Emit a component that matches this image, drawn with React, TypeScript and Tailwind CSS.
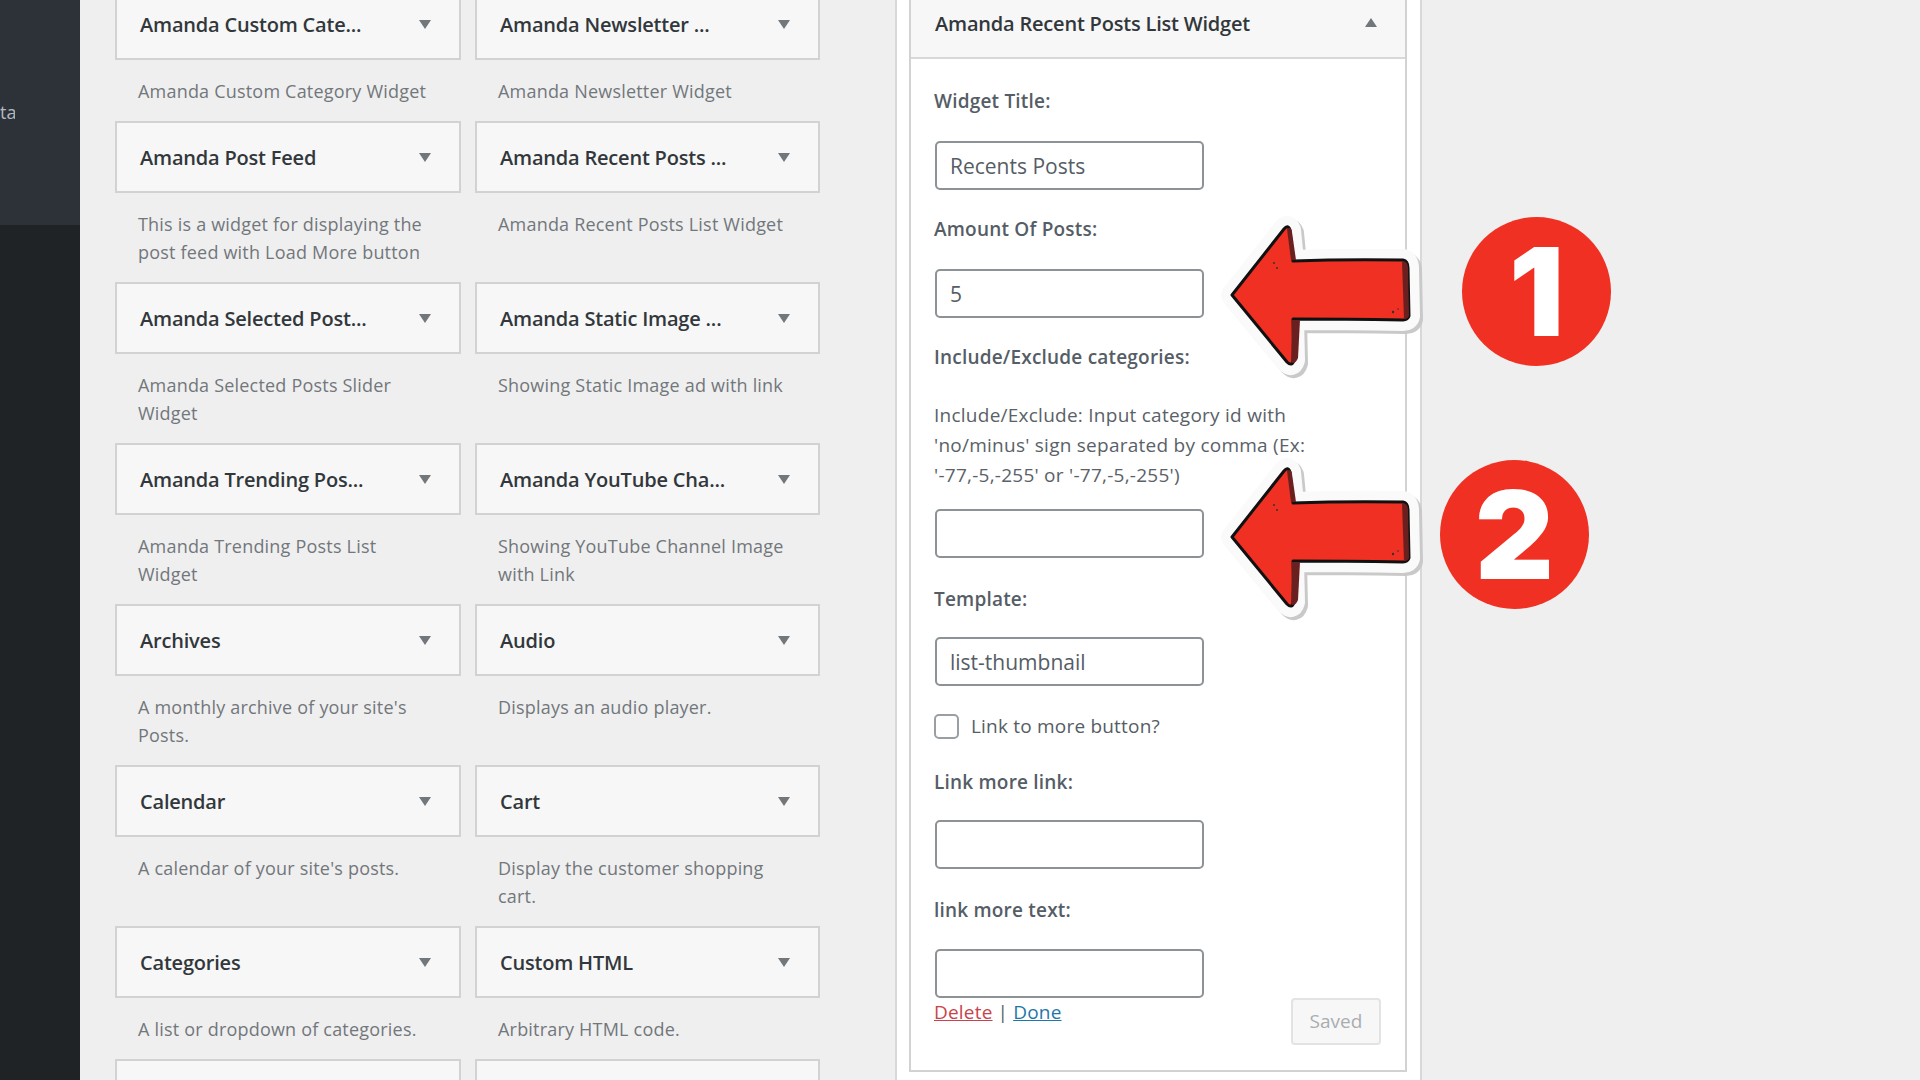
const widgets = [
  { title: "Amanda Custom Cate...", desc: "Amanda Custom Category Widget" },
  { title: "Amanda Newsletter ...", desc: "Amanda Newsletter Widget" },
  { title: "Amanda Post Feed", desc: "This is a widget for displaying the\npost feed with Load More button" },
  { title: "Amanda Recent Posts ...", desc: "Amanda Recent Posts List Widget" },
  { title: "Amanda Selected Post...", desc: "Amanda Selected Posts Slider\nWidget" },
  { title: "Amanda Static Image ...", desc: "Showing Static Image ad with link" },
  { title: "Amanda Trending Pos...", desc: "Amanda Trending Posts List\nWidget" },
  { title: "Amanda YouTube Cha...", desc: "Showing YouTube Channel Image\nwith Link" },
  { title: "Archives", desc: "A monthly archive of your site's\nPosts." },
  { title: "Audio", desc: "Displays an audio player." },
  { title: "Calendar", desc: "A calendar of your site's posts." },
  { title: "Cart", desc: "Display the customer shopping\ncart." },
  { title: "Categories", desc: "A list or dropdown of categories." },
  { title: "Custom HTML", desc: "Arbitrary HTML code." },
  { title: "", desc: "" },
  { title: "", desc: "" },
];

function Triangle({ up = false }: { up?: boolean }) {
  return (
    <svg width="12" height="9" viewBox="0 0 12 9" className={up ? "shrink-0 mb-[4px]" : "shrink-0"}>
      <polygon points={up ? "6,0 12,9 0,9" : "0,0 12,0 6,9"} fill="#72777c" />
    </svg>
  );
}

function WidgetCard({ title, desc }: { title: string; desc: string }) {
  return (
    <div>
      <div className="h-[72px] bg-[#f7f7f7] border-2 border-[#d2d2d2] pl-[23px] pr-[28px] flex items-center justify-between">
        <span className="pt-[2px] text-[20px] font-semibold text-[#32373c] whitespace-nowrap tracking-[-0.2px]">{title}</span>
        {title && <Triangle />}
      </div>
      <p className="pt-[17px] pb-[16px] pl-[23px] text-[18px] leading-[28px] text-[#72777c] whitespace-pre-line tracking-[0.2px]">{desc}</p>
    </div>
  );
}

function Label({ children }: { children: string }) {
  return <div className="-ml-[1px] h-[28px] leading-[30px] text-[19px] font-semibold text-[#555d66] tracking-[0.2px]">{children}</div>;
}

function TextInput({ value = "" }: { value?: string }) {
  return (
    <input
      readOnly
      value={value}
      className="block w-[269px] h-[49px] bg-white border-2 border-[#8d9296] rounded-[5px] px-[13px] text-[21px] text-[#555d66] outline-none"
    />
  );
}

function Arrow({ className }: { className: string }) {
  const shape = "M17 83 L69 17 Q73 12 75 18 L78 49 Q130 47 188 48 Q193 49 193 56 L194 104 Q193 108 188 108 Q130 107 78 107 L79 148 Q77 155 72 150 Z";
  return (
    <svg width="215" height="175" viewBox="0 0 215 175" className={className}>
      <path d={shape} transform="translate(3 3)" fill="#c9c9c9" stroke="#c9c9c9" strokeWidth="22" strokeLinejoin="round" />
      <path d={shape} fill="#fafafa" stroke="#fafafa" strokeWidth="22" strokeLinejoin="round" />
      <path d={shape} fill="#f03022" stroke="#111111" strokeWidth="3" strokeLinejoin="round" />
      <path d="M72 17 Q76 14 77 20 L81 48 L76 48 Z" fill="#6b2020" />
      <path d="M187 49 Q193 49 193 56 L194 104 Q193 107 189 107 Z" fill="#6b2020" />
      <path d="M77 108 L85 108 L83 146 Q80 153 76 150 Z" fill="#6b2020" />
      <circle cx="59" cy="51" r="1" fill="#333" />
      <circle cx="62" cy="56" r="1" fill="#333" />
      <circle cx="178" cy="100" r="1.2" fill="#333" />
      <circle cx="183" cy="97" r="0.8" fill="#333" />
    </svg>
  );
}

function NumberBadge({ n, className }: { n: string; className: string }) {
  return (
    <div className={`absolute w-[149px] h-[149px] rounded-full bg-[#f03022] flex items-center justify-center text-white text-[122px] leading-none font-black font-['Inter',sans-serif] ${className}`}>
      {n}
    </div>
  );
}

export default function App() {
  return (
    <div className="relative flex w-[1920px] h-[1080px] overflow-hidden bg-[#efefef] font-['Open_Sans',sans-serif]">
      <aside className="w-[80px] shrink-0 flex flex-col bg-[#1f2326]">
        <div className="h-[225px] bg-[#2d3239] pt-[98px] text-[18px] leading-[28px] text-[#b4b9be]">
          <div className="w-[15px] overflow-hidden text-right">ta</div>
        </div>
      </aside>

      <section className="w-[815px] shrink-0 pl-[35px] -mt-[12px]">
        <div className="grid grid-cols-[346px_345px] gap-x-[14px]">
          {widgets.map((w, i) => (
            <WidgetCard key={i} title={w.title} desc={w.desc} />
          ))}
        </div>
      </section>

      <section className="w-[527px] shrink-0 bg-white border-x-2 border-[#d8d8d8] pl-[12px] pr-[13px]">
        <div className="border-x-2 border-b-2 border-[#d2d2d2]">
          <div className="h-[59px] bg-[#f7f7f7] border-b-2 border-[#d8d8d8] pl-[24px] pr-[28px] pb-[9px] flex items-center justify-between">
            <span className="text-[20px] font-semibold text-[#32373c] tracking-[-0.2px]">Amanda Recent Posts List Widget</span>
            <Triangle up />
          </div>
          <div className="pl-[24px] pr-[24px] pt-[27px] pb-[25px] flex flex-col">
            <Label>Widget Title:</Label>
            <div className="mt-[27px]">
              <TextInput value="Recents Posts" />
            </div>
            <div className="mt-[24px]">
              <Label>Amount Of Posts:</Label>
            </div>
            <div className="mt-[27px]">
              <TextInput value="5" />
            </div>
            <div className="mt-[24px]">
              <Label>Include/Exclude categories:</Label>
            </div>
            <p className="-ml-[1px] mt-[30px] text-[19px] leading-[30px] text-[#5a6168] tracking-[0.25px] whitespace-pre-line">
              {"Include/Exclude: Input category id with\n'no/minus' sign separated by comma (Ex:\n'-77,-5,-255' or '-77,-5,-255')"}
            </p>
            <div className="mt-[19px]">
              <TextInput />
            </div>
            <div className="mt-[26px]">
              <Label>Template:</Label>
            </div>
            <div className="mt-[25px]">
              <TextInput value="list-thumbnail" />
            </div>
            <label className="-ml-[1px] mt-[28px] h-[25px] flex items-center gap-[12px] text-[19px] text-[#555d66] tracking-[0.2px]">
              <input type="checkbox" readOnly className="appearance-none w-[25px] h-[25px] bg-white border-2 border-[#9a9fa3] rounded-[5px]" />
              Link to more button?
            </label>
            <div className="mt-[28px]">
              <Label>Link more link:</Label>
            </div>
            <div className="mt-[25px]">
              <TextInput />
            </div>
            <div className="mt-[26px]">
              <Label>link more text:</Label>
            </div>
            <div className="mt-[26px]">
              <TextInput />
            </div>
            <div className="flex items-start justify-between">
              <div className="-ml-[1px] text-[19px] leading-[28px] text-[#555d66] tracking-[0.2px]">
                <a href="#" className="text-[#c8444c] underline">Delete</a>
                <span className="mx-[5px]">|</span>
                <a href="#" className="text-[#1f77a8] underline">Done</a>
              </div>
              <button className="w-[90px] h-[47px] bg-[#f7f7f7] border-2 border-[#e3e3e3] rounded-[4px] text-[19px] text-[#a9adb1]">Saved</button>
            </div>
          </div>
        </div>
      </section>

      <Arrow className="absolute left-[1215px] top-[212px]" />
      <Arrow className="absolute left-[1215px] top-[454px]" />
      <NumberBadge n="1" className="left-[1462px] top-[217px]" />
      <NumberBadge n="2" className="left-[1440px] top-[460px]" />
    </div>
  );
}
